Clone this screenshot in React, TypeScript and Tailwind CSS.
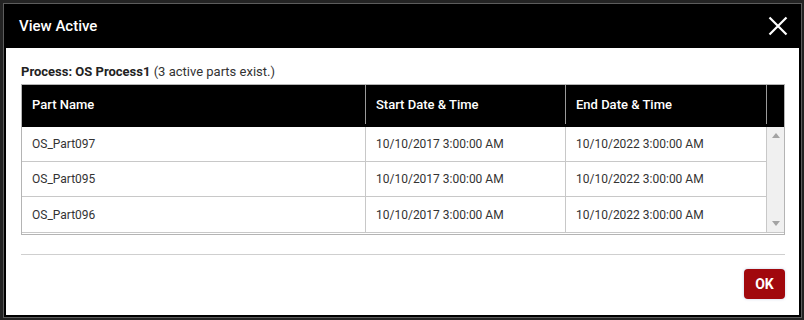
const rows = [
  { name: "OS_Part097", start: "10/10/2017 3:00:00 AM", end: "10/10/2022 3:00:00 AM" },
  { name: "OS_Part095", start: "10/10/2017 3:00:00 AM", end: "10/10/2022 3:00:00 AM" },
  { name: "OS_Part096", start: "10/10/2017 3:00:00 AM", end: "10/10/2022 3:00:00 AM" },
];

export default function App() {
  return (
    <div className="h-[320px] w-[804px] bg-[#232323] pb-[2px] pl-[3px] pr-[2px] pt-[3px] font-['Roboto',sans-serif]">
      <div className="h-full border border-[#5c5c5c]">
        <div className="flex h-full flex-col border-2 border-black bg-white">
          <div className="-mx-[2px] -mt-[2px] flex h-[44px] items-center justify-between bg-black pl-[15px] pr-[12px]">
            <span className="text-[15px] font-medium text-white">View Active</span>
            <svg width="20" height="20" viewBox="0 0 20 20" className="mr-[1px]">
              <path d="M1.5 1.5 L18.5 18.5 M18.5 1.5 L1.5 18.5" stroke="white" strokeWidth="2.2" />
            </svg>
          </div>

          <div className="flex flex-1 flex-col pl-[15px] pr-[14px] pt-[16px]">
            <div className="text-[13px] leading-[16px] text-[#222]">
              <span className="font-bold">Process: OS Process1</span>{" "}
              <span className="text-[#333]">(3 active parts exist.)</span>
            </div>

            <div className="mt-[4px] border-x border-b border-t border-[#b4b4b4]">
              <div className="grid h-[42px] grid-cols-[344px_200px_201px_1fr] bg-black pb-[3px] text-[13px] font-medium text-white">
                <div className="flex items-center border-r border-[#9a9a9a] pl-[10px]">Part Name</div>
                <div className="flex items-center border-r border-[#9a9a9a] pl-[10px]">Start Date &amp; Time</div>
                <div className="flex items-center border-r border-[#9a9a9a] pl-[10px]">End Date &amp; Time</div>
                <div />
              </div>
              <div className="mb-[1px] flex border-b border-[#c8c8c8]">
                <div className="flex-1">
                  {rows.map((r, i) => (
                    <div
                      key={r.name}
                      className={`grid h-[35px] grid-cols-[344px_200px_201px] text-[12px] text-[#333] ${
                        i < rows.length - 1 ? "border-b border-[#c8c8c8]" : ""
                      }`}
                    >
                      <div className="flex items-center border-r border-[#c8c8c8] pl-[10px]">{r.name}</div>
                      <div className="flex items-center border-r border-[#c8c8c8] pl-[10px]">{r.start}</div>
                      <div className="flex items-center border-r border-[#c8c8c8] pl-[10px]">{r.end}</div>
                    </div>
                  ))}
                </div>
                <div className="flex w-[17px] flex-col items-center justify-between bg-[#f0f0f0] py-[6px]">
                  <svg width="8" height="5" viewBox="0 0 8 5">
                    <path d="M0 5 L4 0 L8 5 Z" fill="#a3a3a3" />
                  </svg>
                  <svg width="8" height="5" viewBox="0 0 8 5">
                    <path d="M0 0 L8 0 L4 5 Z" fill="#a3a3a3" />
                  </svg>
                </div>
              </div>
            </div>

            <div className="mt-[19px] border-t border-[#cfcfcf]" />

            <div className="mt-[14px] flex justify-end">
              <button className="h-[30px] w-[41px] rounded-[4px] bg-[#a1080d] text-[14px] font-bold text-white shadow-[0_0_3px_rgba(0,60,160,0.25)]">
                OK
              </button>
            </div>
          </div>
        </div>
      </div>
    </div>
  );
}
